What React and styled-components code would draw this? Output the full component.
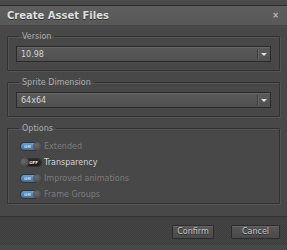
import React from 'react';
import styled, { createGlobalStyle } from 'styled-components';

const Global = createGlobalStyle`
  html, body {
    margin: 0;
    background: #484848;
  }
  body {
    font-family: "DejaVu Sans", Verdana, sans-serif;
  }
`;

const Dialog = styled.div`
  width: 287px;
  height: 250px;
  box-sizing: border-box;
  padding-top: 5px;
  display: flex;
  flex-direction: column;
  background: #4a4a4a;
`;

const TitleBar = styled.div`
  height: 20px;
  box-sizing: border-box;
  border-top: 1px solid #2b2b2b;
  background: linear-gradient(#5e5e5e, #585858);
  display: flex;
  align-items: center;
  justify-content: space-between;
  padding: 0 8px 0 7px;
`;

const Title = styled.span`
  font-family: "DejaVu Sans", Verdana, sans-serif;
  font-weight: bold;
  font-size: 10px;
  color: #dedede;
  text-shadow: 0 1px 0 #333;
`;

const Close = styled.span`
  font-size: 8px;
  font-weight: bold;
  color: #bdbdbd;
  line-height: 1;
`;

const Body = styled.div`
  flex: 1;
  padding: 7px 7px 0;
  display: flex;
  flex-direction: column;
  gap: 7px;
  background-color: #474747;
  background-image: repeating-conic-gradient(#4a4a4a 0 25%, #454545 0 50%);
  background-size: 2px 2px;
`;

const Group = styled.fieldset`
  margin: 0;
  padding: ${p => p.$pad || '5px 8px 8px'};
  border: 1px solid #323232;
  box-shadow: inset 1px 1px 0 #555, 1px 1px 0 #555;
  border-radius: 1px;
`;

const Legend = styled.legend`
  padding: 0 3px;
  margin-left: 3px;
  font-size: 8px;
  color: #ababab;
`;

const Select = styled.div`
  height: 16px;
  box-sizing: border-box;
  border: 1px solid #2a2a2a;
  background: linear-gradient(#5a5a5a, #505050);
  box-shadow: inset 0 1px 0 #666;
  display: flex;
  align-items: center;
`;

const Value = styled.span`
  flex: 1;
  padding-left: 4px;
  font-size: 8px;
  color: #d4d4d4;
`;

const Arrow = styled.span`
  width: 12px;
  height: 10px;
  border-left: 1px solid #3a3a3a;
  box-shadow: inset 1px 0 0 #666;
  display: flex;
  align-items: center;
  justify-content: center;
  &::after {
    content: '';
    border-left: 3px solid transparent;
    border-right: 3px solid transparent;
    border-top: 3px solid #e0e0e0;
  }
`;

const Options = styled.div`
  display: flex;
  flex-direction: column;
  gap: 5px;
  padding: 8px 0 3px 5px;
`;

const Row = styled.div`
  height: 11px;
  display: flex;
  align-items: center;
  gap: 3px;
`;

const Toggle = styled.span`
  position: relative;
  width: 20px;
  height: 7px;
  border-radius: 4px;
  background: ${p => (p.$on ? 'linear-gradient(#6a9ccf, #3f6d9e)' : 'linear-gradient(#2a2a2a, #1c1c1c)')};
  box-shadow: 0 0 0 1px #333;
  display: flex;
  align-items: center;
  justify-content: ${p => (p.$on ? 'flex-start' : 'flex-end')};
  padding: 0 3px;
  box-sizing: border-box;
  font-size: 4px;
  font-weight: bold;
  color: ${p => (p.$on ? '#c4dcf4' : '#e0e0e0')};
  &::after {
    content: '';
    position: absolute;
    top: -1px;
    ${p => (p.$on ? 'right: -1px;' : 'left: -1px;')}
    width: 9px;
    height: 9px;
    border-radius: 50%;
    background: radial-gradient(circle at 40% 35%, #6a6a6a, #3a3a3a);
  }
`;

const Label = styled.span`
  font-size: 8px;
  color: ${p => (p.$active ? '#d2d2d2' : '#7c7c7c')};
`;

const Footer = styled.div`
  height: 29px;
  box-sizing: border-box;
  border-top: 1px solid #333;
  box-shadow: inset 0 1px 0 #3e3e3e;
  margin-top: 5px;
  margin-left: -7px;
  margin-right: -7px;
  background-color: #414141;
  background-image: repeating-conic-gradient(#444 0 25%, #3e3e3e 0 50%);
  background-size: 2px 2px;
  display: flex;
  justify-content: flex-end;
  align-items: center;
  gap: 17px;
  padding: 1px 7px 0 0;
`;

const Button = styled.button`
  width: ${p => p.$w}px;
  height: 14px;
  padding: 0;
  border: 1px solid #2c2c2c;
  border-radius: 1px;
  background: linear-gradient(#565656, #4a4a4a);
  box-shadow: inset 0 1px 0 #646464;
  font-family: "DejaVu Sans", Verdana, sans-serif;
  font-size: 8px;
  color: #c4c4c4;
  text-shadow: 0 1px 0 #2a2a2a;
`;

const options = [
  { label: 'Extended', on: true },
  { label: 'Transparency', on: false, active: true },
  { label: 'Improved animations', on: true },
  { label: 'Frame Groups', on: true },
];

const App = () => {
  return (
    <>
      <Global />
      <Dialog>
        <TitleBar>
          <Title>Create Asset Files</Title>
          <Close>×</Close>
        </TitleBar>
        <Body>
          <Group>
            <Legend>Version</Legend>
            <Select>
              <Value>10.98</Value>
              <Arrow />
            </Select>
          </Group>
          <Group>
            <Legend>Sprite Dimension</Legend>
            <Select>
              <Value>64x64</Value>
              <Arrow />
            </Select>
          </Group>
          <Group $pad="0 8px 0">
            <Legend>Options</Legend>
            <Options>
              {options.map(o => (
                <Row key={o.label}>
                  <Toggle $on={o.on}>{o.on ? 'ON' : 'OFF'}</Toggle>
                  <Label $active={o.active}>{o.label}</Label>
                </Row>
              ))}
            </Options>
          </Group>
          <Footer>
            <Button $w={42}>Confirm</Button>
            <Button $w={49}>Cancel</Button>
          </Footer>
        </Body>
      </Dialog>
    </>
  );
};

export default App;
